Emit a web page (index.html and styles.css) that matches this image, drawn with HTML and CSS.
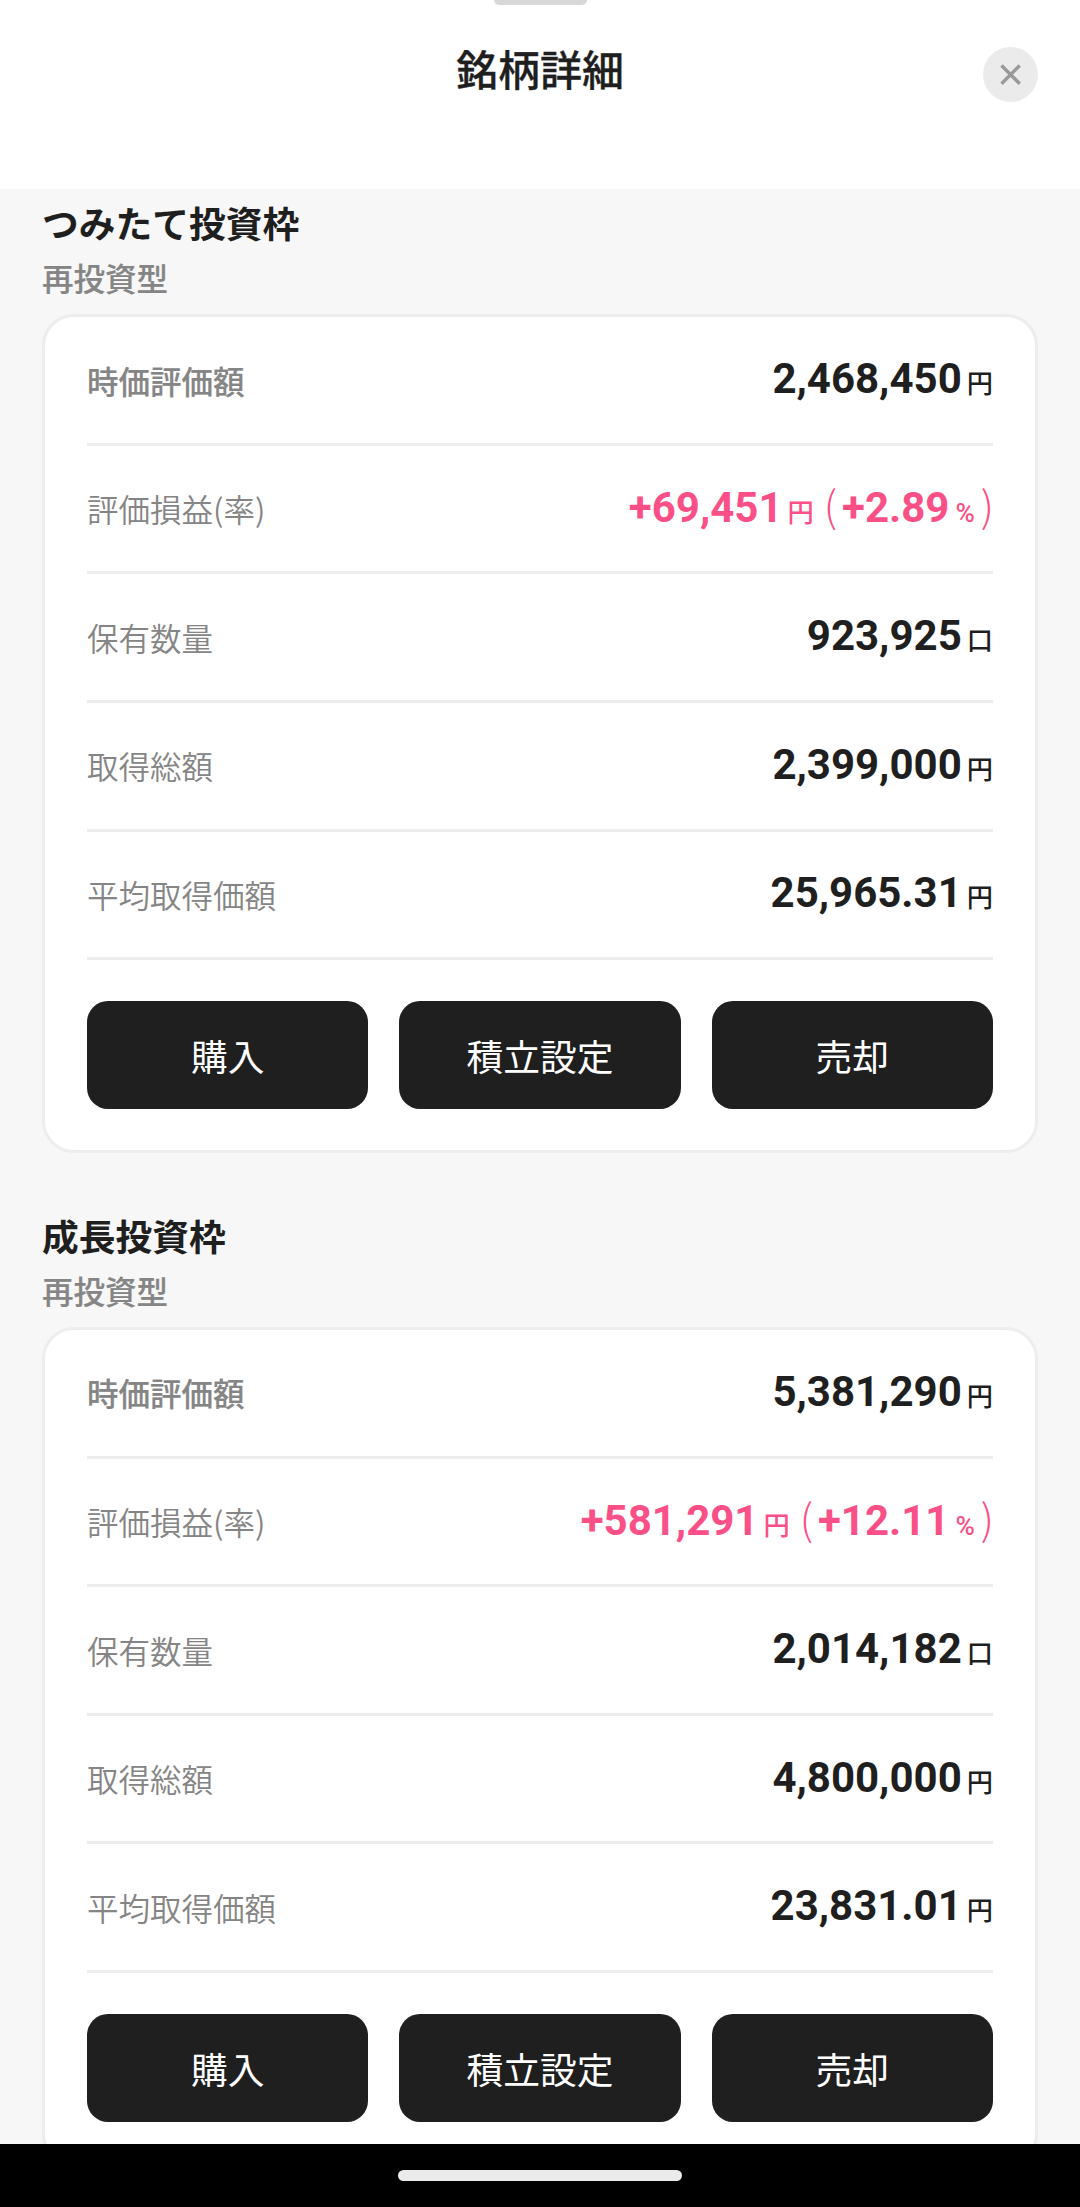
FILE: index.html
```html
<!DOCTYPE html>
<html lang="ja">
<head>
    <meta charset="UTF-8">
    <meta name="viewport" content="width=device-width, initial-scale=1.0">
    <title>銘柄詳細</title>
    <link rel="stylesheet" href="styles.css">
</head>
<body>
    <div class="screen">
        <header class="sheet-header">
            <div class="grabber"></div>
            <h1 class="sheet-title">銘柄詳細</h1>
            <button class="close-btn" aria-label="閉じる">
                <svg width="22" height="22" viewBox="0 0 22 22" fill="none" stroke="#999" stroke-width="3.4">
                    <path d="M1.5 1.5L19.7 19.7M19.7 1.5L1.5 19.7"/>
                </svg>
            </button>
        </header>

        <main class="content">
            <section class="holding">
                <h2 class="holding-title">つみたて投資枠</h2>
                <p class="holding-type">再投資型</p>
                <div class="card">
                    <div class="row">
                        <span class="label label-strong">時価評価額</span>
                        <span class="value">2,468,450<span class="unit">円</span></span>
                    </div>
                    <div class="row">
                        <span class="label">評価損益(率)</span>
                        <span class="value gain">+69,451<span class="unit">円</span><span class="paren open">(</span>+2.89<span class="percent">%</span><span class="paren close">)</span></span>
                    </div>
                    <div class="row">
                        <span class="label">保有数量</span>
                        <span class="value">923,925<span class="unit">口</span></span>
                    </div>
                    <div class="row">
                        <span class="label">取得総額</span>
                        <span class="value">2,399,000<span class="unit">円</span></span>
                    </div>
                    <div class="row">
                        <span class="label">平均取得価額</span>
                        <span class="value">25,965.31<span class="unit">円</span></span>
                    </div>
                    <div class="buttons">
                        <button class="btn">購入</button>
                        <button class="btn">積立設定</button>
                        <button class="btn">売却</button>
                    </div>
                </div>
            </section>

            <section class="holding">
                <h2 class="holding-title">成長投資枠</h2>
                <p class="holding-type">再投資型</p>
                <div class="card">
                    <div class="row">
                        <span class="label label-strong">時価評価額</span>
                        <span class="value">5,381,290<span class="unit">円</span></span>
                    </div>
                    <div class="row">
                        <span class="label">評価損益(率)</span>
                        <span class="value gain">+581,291<span class="unit">円</span><span class="paren open">(</span>+12.11<span class="percent">%</span><span class="paren close">)</span></span>
                    </div>
                    <div class="row">
                        <span class="label">保有数量</span>
                        <span class="value">2,014,182<span class="unit">口</span></span>
                    </div>
                    <div class="row">
                        <span class="label">取得総額</span>
                        <span class="value">4,800,000<span class="unit">円</span></span>
                    </div>
                    <div class="row">
                        <span class="label">平均取得価額</span>
                        <span class="value">23,831.01<span class="unit">円</span></span>
                    </div>
                    <div class="buttons">
                        <button class="btn">購入</button>
                        <button class="btn">積立設定</button>
                        <button class="btn">売却</button>
                    </div>
                </div>
            </section>
        </main>

        <footer class="nav-bar">
            <div class="nav-handle"></div>
        </footer>
    </div>
</body>
</html>
```

FILE: styles.css
```css
* {
    box-sizing: border-box;
}
body {
    font-family: Roboto, 'Noto Sans CJK JP', sans-serif;
    margin: 0;
    background: #f7f7f7;
    color: #1f1f1f;
}
h1, h2, p {
    margin: 0;
}
button {
    border: none;
    padding: 0;
    font-family: inherit;
    cursor: pointer;
}
.screen {
    display: flex;
    flex-direction: column;
    height: 2207px;
    overflow: hidden;
}

/* Header */
.sheet-header {
    flex: none;
    display: grid;
    grid-template-columns: 55px 1fr 55px;
    grid-template-rows: 5px auto;
    height: 189px;
    padding: 0 42px;
    background: #fff;
}
.grabber {
    grid-column: 1 / -1;
    justify-self: center;
    width: 93px;
    height: 5px;
    border-radius: 0 0 8px 8px;
    background: #d8d8d8;
}
.sheet-title {
    grid-column: 2;
    margin-top: 37px;
    font-size: 42px;
    line-height: 60px;
    font-weight: 500;
    text-align: center;
    -webkit-text-stroke: 0.3px;
}
.close-btn {
    display: flex;
    align-items: center;
    justify-content: center;
    width: 55px;
    height: 55px;
    margin-top: 42px;
    border-radius: 50%;
    background: #ebebeb;
}

/* Holdings */
.content {
    flex: 1;
    min-height: 0;
    overflow: hidden;
    padding: 0 42px;
}
.holding {
    height: 1012.8px;
    padding-top: 10px;
}
.holding-title {
    font-size: 36.75px;
    line-height: 54px;
    font-weight: 700;
}
.holding-type {
    margin-top: 4px;
    font-size: 31.5px;
    line-height: 48px;
    font-weight: 500;
    color: #858585;
    -webkit-text-stroke: 0.2px;
}
.card {
    margin-top: 9.3px;
    height: 839px;
    padding: 0 42px;
    border: 3px solid #ededed;
    border-radius: 32px;
    background: #fff;
}
.row {
    display: flex;
    align-items: center;
    justify-content: space-between;
    height: 128.6px;
    border-bottom: 3px solid #ededed;
}
.label {
    padding-bottom: 1px;
    font-family: 'Noto Sans CJK JP', sans-serif;
    font-size: 31.5px;
    line-height: 46px;
    font-weight: 350;
    color: #858585;
}
.label-strong {
    font-weight: 500;
    -webkit-text-stroke: 0.2px;
}
.value {
    padding-top: 3px;
    font-size: 42px;
    line-height: 50px;
    font-weight: 700;
    white-space: nowrap;
}
.unit {
    margin-left: 5px;
    font-size: 26.25px;
    font-weight: 500;
}
.gain {
    padding-top: 0;
    color: #fa5087;
}
.percent {
    margin-left: 6px;
    font-size: 26.25px;
    font-weight: 500;
}
.paren {
    font-family: 'Noto Sans CJK JP', sans-serif;
    font-size: 42px;
    font-weight: 300;
}
.open {
    margin-left: 10px;
    margin-right: 5px;
}
.close {
    margin-left: 6px;
    margin-right: -1px;
}
.buttons {
    display: grid;
    grid-template-columns: repeat(3, 1fr);
    gap: 31px;
    margin-top: 41px;
}
.btn {
    height: 108px;
    border-radius: 21px;
    background: #1f1f1f;
    color: #fff;
    font-size: 36.75px;
    font-weight: 400;
}

/* System navigation */
.nav-bar {
    flex: none;
    display: flex;
    justify-content: center;
    height: 63px;
    padding-top: 26px;
    background: #000;
}
.nav-handle {
    width: 284px;
    height: 11px;
    border-radius: 6px;
    background: #ebebeb;
}
```
